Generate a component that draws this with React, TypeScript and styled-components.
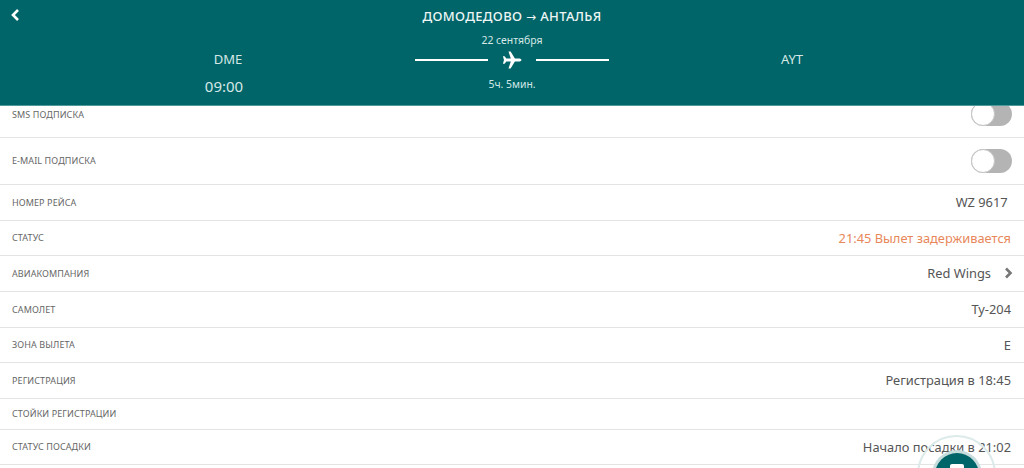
import styled, { createGlobalStyle } from 'styled-components';

const GlobalStyle = createGlobalStyle`
  html, body {
    margin: 0;
    padding: 0;
    background: #fff;
    font-family: "Noto Sans", "Open Sans", sans-serif;
  }
`;

const Page = styled.div`
  width: 1024px;
  height: 468px;
  overflow: hidden;
  position: relative;
  display: flex;
  flex-direction: column;
`;

const Header = styled.header`
  position: relative;
  z-index: 2;
  flex: none;
  height: 105px;
  background: #006568;
  border-bottom: 1px solid #4f9a9c;
  color: #d5e8e7;
  display: flex;
  flex-direction: column;
  align-items: center;
`;

const BackButton = styled.button`
  position: absolute;
  left: 9px;
  top: 8px;
  width: 12px;
  height: 14px;
  padding: 0;
  border: 0;
  background: none;
  color: #fff;
  display: flex;
`;

const Title = styled.h1`
  margin: 9px 0 0;
  font-size: 13px;
  line-height: 14px;
  font-weight: 500;
  letter-spacing: 0.35px;
  color: #eef5f5;
`;

const Arrow = styled.span`
  font-family: "DejaVu Sans", sans-serif;
  font-weight: 400;
  font-size: 12px;
`;

const Route = styled.div`
  width: 100%;
  display: grid;
  grid-template-columns: 1fr 200px 1fr;
  margin-top: 10px;
`;

const Airport = styled.div<{ $shift: number }>`
  display: flex;
  flex-direction: column;
  align-items: center;
  transform: translateX(${(p) => p.$shift}px);
`;

const Code = styled.span`
  margin-top: 17px;
  font-size: 13px;
  line-height: 16px;
`;

const Time = styled.span`
  margin-top: 10px;
  margin-right: 8px;
  font-size: 15px;
  line-height: 18px;
`;

const Middle = styled.div`
  display: flex;
  flex-direction: column;
  align-items: center;
`;

const Small = styled.span`
  font-size: 10.4px;
  line-height: 12px;
`;

const FlightLine = styled.div`
  width: 194px;
  margin: 5px 0 9px;
  display: flex;
  align-items: center;
  justify-content: space-between;
  color: #fff;
`;

const Rule = styled.span`
  width: 73px;
  height: 2px;
  background: #fff;
`;

const Body = styled.main`
  flex: 1;
  min-height: 0;
  overflow: hidden;
`;

const List = styled.div`
  margin-top: -14px;
`;

const Row = styled.div<{ $height: number }>`
  box-sizing: border-box;
  height: ${(p) => p.$height}px;
  padding: 0 13px 1px 12px;
  display: flex;
  align-items: center;
  justify-content: space-between;
  border-bottom: 1px solid #e4e4e4;
`;

const Label = styled.span`
  font-size: 9px;
  letter-spacing: 0.1px;
  color: #666;
`;

const Value = styled.span<{ $warn?: boolean }>`
  font-size: 12.85px;
  color: ${(p) => (p.$warn ? '#e8875a' : '#555')};
  display: flex;
  align-items: center;
  gap: 13px;
`;

const Chevron = styled.svg`
  width: 9px;
  height: 12px;
  color: #777;
  margin-right: -2px;
`;

const Toggle = styled.span`
  width: 41px;
  height: 24px;
  box-sizing: border-box;
  border-radius: 12px;
  background: #b4b4b4;
  position: relative;
  flex: none;
  margin-right: -1px;

  &::before {
    content: '';
    position: absolute;
    left: 0;
    top: 0;
    width: 24px;
    height: 24px;
    box-sizing: border-box;
    border-radius: 50%;
    background: #fff;
    border: 1px solid #c4c4c4;
  }
`;

const Fab = styled.div`
  position: absolute;
  z-index: 3;
  left: 917px;
  top: 435px;
  width: 79px;
  height: 79px;
  box-sizing: border-box;
  border-radius: 50%;
  border: 2px solid #dceaea;
  display: flex;
  align-items: center;
  justify-content: center;
`;

const FabInner = styled.div`
  width: 44px;
  height: 44px;
  border-radius: 50%;
  background: #006568;
  box-shadow: 0 0 0 3px #c6dcdc;
  display: flex;
  justify-content: center;
  padding-top: 11px;
  box-sizing: border-box;
`;

const FabGlyph = styled.span`
  width: 14px;
  height: 12px;
  background: #fff;
  border-radius: 2px 2px 0 0;
`;

const rows = [
  { label: 'НОМЕР РЕЙСА', value: 'WZ 9617\u00a0', height: 36 },
  { label: 'СТАТУС', value: '21:45 Вылет задерживается', warn: true, height: 35 },
  { label: 'АВИАКОМПАНИЯ', value: 'Red Wings', link: true, height: 36 },
  { label: 'САМОЛЕТ', value: 'Ту-204', height: 36 },
  { label: 'ЗОНА ВЫЛЕТА', value: 'E', height: 35 },
  { label: 'РЕГИСТРАЦИЯ', value: 'Регистрация в 18:45', height: 36 },
  { label: 'СТОЙКИ РЕГИСТРАЦИИ', value: '', height: 31 },
  { label: 'СТАТУС ПОСАДКИ', value: 'Начало посадки в 21:02', height: 35 },
];

export default function App() {
  return (
    <Page>
      <GlobalStyle />
      <Header>
        <BackButton aria-label="Назад">
          <svg width="12" height="14" viewBox="0 0 12 14" fill="none">
            <path d="M9 2 4 7l5 5" stroke="currentColor" strokeWidth="2.6" />
          </svg>
        </BackButton>
        <Title>ДОМОДЕДОВО <Arrow>→</Arrow> АНТАЛЬЯ</Title>
        <Route>
          <Airport $shift={22}>
            <Code>DME</Code>
            <Time>09:00</Time>
          </Airport>
          <Middle>
            <Small>22 сентября</Small>
            <FlightLine>
              <Rule />
              <svg width="20" height="18" viewBox="0 0 20 18" fill="currentColor">
                <path d="M19.5 9c0-.9-1.3-1.5-2.6-1.5h-4L8.6.4H6.5l2.3 7.1H4.4L2.6 5.2H.9L2 9 .9 12.8h1.7l1.8-2.3h4.4l-2.3 7.1h2.1l4.3-7.1h4c1.3 0 2.6-.6 2.6-1.5Z" />
              </svg>
              <Rule />
            </FlightLine>
            <Small>5ч. 5мин.</Small>
          </Middle>
          <Airport $shift={-26}>
            <Code>AYT</Code>
          </Airport>
        </Route>
      </Header>
      <Body>
        <List>
          <Row $height={46}>
            <Label>SMS ПОДПИСКА</Label>
            <Toggle />
          </Row>
          <Row $height={47}>
            <Label>E-MAIL ПОДПИСКА</Label>
            <Toggle />
          </Row>
          {rows.map((row) => (
            <Row key={row.label} $height={row.height}>
              <Label>{row.label}</Label>
              <Value $warn={row.warn}>
                {row.value}
                {row.link && (
                  <Chevron viewBox="0 0 9 12" fill="none">
                    <path d="M2 1.5 6.5 6 2 10.5" stroke="currentColor" strokeWidth="2.6" />
                  </Chevron>
                )}
              </Value>
            </Row>
          ))}
        </List>
      </Body>
      <Fab>
        <FabInner>
          <FabGlyph />
        </FabInner>
      </Fab>
    </Page>
  );
}
